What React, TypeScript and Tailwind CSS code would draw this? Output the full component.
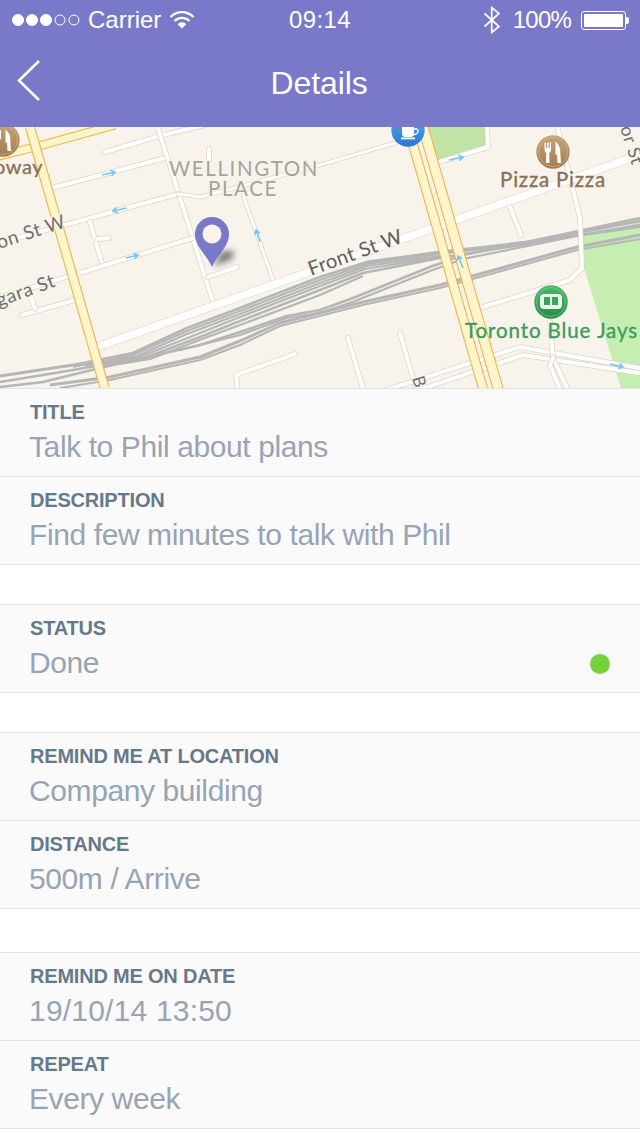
const MAP_FONT = "font-['Lato','Liberation_Sans',sans-serif]";

function Road({ d, w = 4 }: { d: string; w?: number }) {
  return (
    <g fill="none" strokeLinecap="round" strokeLinejoin="round">
      <path d={d} stroke="#dcd5c8" strokeWidth={w + 1.5} />
      <path d={d} stroke="#ffffff" strokeWidth={w} />
    </g>
  );
}

function Highway({ d, w = 9 }: { d: string; w?: number }) {
  return (
    <g fill="none">
      <path d={d} stroke="#f7ae38" strokeWidth={w + 2} />
      <path d={d} stroke="#fdf5cc" strokeWidth={w} />
    </g>
  );
}

function OneWay({ x1, y1, x2, y2 }: { x1: number; y1: number; x2: number; y2: number }) {
  const a = Math.atan2(y2 - y1, x2 - x1);
  const hx = (s: number) => x2 - 5 * Math.cos(a + s);
  const hy = (s: number) => y2 - 5 * Math.sin(a + s);
  return (
    <path
      d={`M${x1} ${y1} L${x2} ${y2} M${hx(0.6)} ${hy(0.6)} L${x2} ${y2} L${hx(-0.6)} ${hy(-0.6)}`}
      fill="none"
      stroke="#72c4fb"
      strokeWidth="1.6"
    />
  );
}

function Cutlery({ cx, cy }: { cx: number; cy: number }) {
  return (
    <g transform={`translate(${cx} ${cy})`}>
      <circle r="16.7" fill="url(#poiBrown)" />
      <circle r="14.5" fill="none" stroke="#d9bd98" strokeWidth="0.8" opacity="0.7" />
      <path
        d="M-8.5 -9.5 L-7.2 -9.5 L-7.2 -4 L-6 -4 L-6 -9.5 L-4.5 -9.5 L-4.5 -4 L-3.3 -4 L-3.3 -9.5 L-2 -9.5 L-2 -3 Q-2 0 -3.8 1 L-3.5 11 L-7 11 L-6.7 1 Q-8.5 0 -8.5 -3 Z"
        fill="#ffffff"
      />
      <path d="M2.5 -10.5 Q8 -6 7.4 2 L8 11 L4.4 11 L4.2 3 L2.5 2.5 Z" fill="#ffffff" />
    </g>
  );
}

function MapView() {
  return (
    <svg viewBox="0 127 640 261" className="block w-full h-[261px]">
      <defs>
        <linearGradient id="poiBrown" x1="0" y1="0" x2="0" y2="1">
          <stop offset="0" stopColor="#c9a47a" />
          <stop offset="1" stopColor="#a27c50" />
        </linearGradient>
        <linearGradient id="poiBlue" x1="0" y1="0" x2="0" y2="1">
          <stop offset="0" stopColor="#58aef5" />
          <stop offset="1" stopColor="#2a78cf" />
        </linearGradient>
        <linearGradient id="poiGreen" x1="0" y1="0" x2="0" y2="1">
          <stop offset="0" stopColor="#4fb768" />
          <stop offset="1" stopColor="#268c44" />
        </linearGradient>
        <filter id="pinBlur" x="-50%" y="-50%" width="200%" height="200%">
          <feGaussianBlur stdDeviation="3" />
        </filter>
      </defs>

      <rect x="0" y="127" width="640" height="261" fill="#f8f4ec" />

      {/* parks */}
      <path d="M427 127 L486 127 L487 147 L436 162 Z" fill="#bfe4a6" />
      <path d="M577 236 L640 222 L640 388 L621 388 L584 268 Z" fill="#c6edb2" />

      {/* rail lines */}
      <g fill="none" stroke="#b6b6b6" strokeWidth="2.2" strokeLinejoin="round">
        <path d="M0 376 L73 365 L133 353 L187 328 L240 308 L320 277 L367 262 L440 252 L477 248 L527 242 L640 218" strokeWidth="2.8" />
        <path d="M640 221 L527 243.5 L477 249.5 L440 254" />
        <path d="M73 367 L133 355 L187 331 L240 311 L320 280 L367 264 L440 254" />
        <path d="M85 366 L137 356 L187 334 L240 314 L320 283 L367 266 L440 256" />
        <path d="M100 364 L142 356 L190 337 L240 317 L320 286 L365 269 L440 257" />
        <path d="M0 382 L73 370 L147 357 L200 337 L240 321 L320 290 L363 273 L440 258 L477 252 L527 244 L640 225" strokeWidth="2.6" />
        <path d="M120 364 L150 359 L205 338 L240 325 L320 295 L363 276" />
        <path d="M0 387 L43 382 L100 368 L200 345 L240 332 L287 316 L320 310 L353 298 L430 267 L463 255 L577 232 L640 221" strokeWidth="2.6" />
        <path d="M180 350 L240 335 L287 318 L320 313 L355 301 L430 271 L463 259 L577 236 L640 227" />
        <path d="M50 385 L110 377 L200 357 L240 341 L280 323 L363 302 L440 285 L577 247 L640 235" strokeWidth="3" />
        <path d="M60 388 L110 380 L200 360 L240 345 L280 326 L363 305 L440 288 L577 250 L640 239" />
      </g>

      {/* small streets */}
      <Road d="M105 152 L163 135 L205 125" />
      <Road d="M52 188 L165 158" />
      <Road d="M157 125 L213 302" />
      <Road d="M-5 244 L178 194" />
      <Road d="M178 194 L201 197 L320 165 L395 143" w={3} />
      <Road d="M243 195 L273 280" w={3} />
      <Road d="M209 149 L209 160" />
      <Road d="M90 222 L102 263" />
      <Road d="M97 239 L109 238" />
      <Road d="M-5 299 L193 238" />
      <Road d="M22 315 L75 300" />
      <Road d="M28 288 L35 309" />
      <Road d="M208 277 L237 267" />
      <Road d="M238 392 L236 375 L295 354" />
      <Road d="M557 125 L580 218 L582 268 L570 280 L480 308" />
      <Road d="M487 125 L488 147 L436 163" />
      <Road d="M508 202 L521 235" />
      <Road d="M348 338 L364 392" />
      <Road d="M400 333 L417 392" />
      <Road d="M380 392 L520 347 L645 369" />
      <Road d="M413 392 L523 355 L645 374" />
      <Road d="M550 322 L553 358 L569 392" />
      <Road d="M553 358 L550 365 L561 392" />

      {/* front st */}
      <path d="M97 347 L645 153" fill="none" stroke="#e3dccd" strokeWidth="9" />
      <path d="M97 347 L645 153" fill="none" stroke="#ffffff" strokeWidth="7.5" />

      {/* highways */}
      <Highway d="M-5 157 L35 147 L115 125" w={7} />
      <Highway d="M30 127 L104.7 388" w={8} />
      <Highway d="M408 127 L484 392" w={8} />
      <Highway d="M423 127 L499 392" w={9} />

      <OneWay x1={102} y1={175} x2={115} y2={172} />
      <OneWay x1={127} y1={208} x2={113} y2={211} />
      <OneWay x1={126} y1={258} x2={138} y2={255} />
      <OneWay x1={260} y1={242} x2={256} y2={230} />
      <OneWay x1={449} y1={160} x2={463} y2={157} />
      <OneWay x1={463} y1={268} x2={458} y2={256} />
      <OneWay x1={610} y1={364} x2={623} y2={367} />

      {/* labels */}
      <g className={MAP_FONT} style={{ paintOrder: "stroke" }} stroke="#f8f4ec" strokeWidth="2.5" strokeLinejoin="round">
        <text x="244" y="176" textAnchor="middle" fontSize="20.5" letterSpacing="1.6" fill="#a5a39e">WELLINGTON</text>
        <text x="243" y="196" textAnchor="middle" fontSize="20.5" letterSpacing="1.6" fill="#a5a39e">PLACE</text>
        <text x="-6" y="174" fontSize="20" letterSpacing="0.6" fill="#8a7254" stroke="#8a7254" strokeWidth="0.35">oway</text>
        <text x="553" y="187" textAnchor="middle" fontSize="20.5" letterSpacing="0.8" fill="#8a7254" stroke="#8a7254" strokeWidth="0.35">Pizza Pizza</text>
        <text x="551.5" y="338" textAnchor="middle" fontSize="20.5" letterSpacing="0.9" fill="#3c9c5a" stroke="#3c9c5a" strokeWidth="0.35">Toronto Blue Jays</text>
        <text transform="translate(311 276) rotate(-20)" fontSize="20" letterSpacing="0.4" fill="#5f5f5f">Front St W</text>
        <text transform="translate(-1 249) rotate(-18)" fontSize="19" letterSpacing="0.6" fill="#6e6e6e">on St W</text>
        <text transform="translate(-1 307) rotate(-20)" fontSize="19" letterSpacing="0.6" fill="#6e6e6e">gara St</text>
        <text transform="translate(620 128) rotate(72)" fontSize="18" letterSpacing="0.6" fill="#6e6e6e">or St</text>
        <text transform="translate(412 378) rotate(73)" fontSize="17" fill="#6e6e6e">B</text>
      </g>

      {/* places */}
      <Cutlery cx={553} cy={152} />
      <Cutlery cx={3} cy={140} />

      <g>
        <circle cx="408" cy="130" r="16.7" fill="url(#poiBlue)" />
        <path d="M402 127 H414 V133 Q414 137 411 137 H405 Q402 137 402 133 Z" fill="#ffffff" />
        <path d="M414 129 H416 Q418 129 418 131 Q418 134 413 135" fill="none" stroke="#ffffff" strokeWidth="1.3" />
        <rect x="401" y="137.5" width="14" height="1.8" fill="#ffffff" />
      </g>

      <g>
        <circle cx="551" cy="302" r="16.7" fill="url(#poiGreen)" />
        <circle cx="551" cy="302" r="14.5" fill="none" stroke="#8fd6a0" strokeWidth="0.8" opacity="0.7" />
        <rect x="540" y="294" width="22" height="15" rx="4" fill="#e9f6ea" />
        <rect x="544" y="297" width="6" height="8" fill="#3aa457" />
        <rect x="552" y="297" width="6" height="8" fill="#3aa457" />
      </g>

      {/* pin */}
      <path d="M213 266 L222 251 L235 251 L231 260 Z" fill="#000000" opacity="0.5" filter="url(#pinBlur)" />
      <path
        d="M212 267 C207 255 195 247 195 234 A17 17 0 0 1 229 234 C229 247 217 255 212 267 Z"
        fill="#7a78c8"
      />
      <circle cx="212" cy="234" r="9.5" fill="#f8f4ec" />
    </svg>
  );
}

function Field({ label, value, dot, wide }: { label: string; value: string; dot?: boolean; wide?: boolean }) {
  return (
    <div className="h-[88px] bg-[#fafafa] border-b border-[#e3e3e3] pl-[30px] pt-[11px]">
      <div className="text-[20px] leading-[24px] font-bold tracking-[-0.2px] text-[#66798b]">{label}</div>
      <div className="mt-[5px] flex items-center justify-between">
        <span className={wide ? "-ml-[1px] text-[30px] leading-[36px] tracking-[0.2px] text-[#98a4b5]" : "-ml-[1px] text-[30px] leading-[36px] tracking-[-0.4px] text-[#98a4b5]"}>{value}</span>
        {dot && <span className="mt-[2px] mr-[30px] w-5 h-5 rounded-full bg-[#74d33c]" />}
      </div>
    </div>
  );
}

export default function App() {
  return (
    <div className="w-[640px] min-h-[1136px] bg-white font-['Liberation_Sans',Arial,sans-serif]">
      <header className="h-[127px] bg-[#7a78c8] text-white">
        <div className="h-10 grid grid-cols-3 items-center text-[24px] leading-none">
          <div className="flex items-center pl-3">
            <svg width="70" height="14" viewBox="0 0 70 14" fill="#ffffff" stroke="#ffffff" className="mr-[6px]">
              <circle cx="6" cy="7" r="5.5" />
              <circle cx="20" cy="7" r="5.5" />
              <circle cx="34" cy="7" r="5.5" />
              <circle cx="48" cy="7" r="5" fill="none" />
              <circle cx="62" cy="7" r="5" fill="none" />
            </svg>
            <span>Carrier</span>
            <svg width="26" height="20" viewBox="0 0 26 20" fill="none" stroke="#ffffff" strokeWidth="2.4" className="ml-2">
              <path d="M1.5 7 A16 16 0 0 1 24.5 7" />
              <path d="M5.5 11 A10.5 10.5 0 0 1 20.5 11" />
              <path d="M13 18.5 L8.6 14.2 A6 6 0 0 1 17.4 14.2 Z" fill="#ffffff" stroke="none" />
            </svg>
          </div>
          <div className="text-center tracking-[0.4px]">09:14</div>
          <div className="flex items-center justify-end pr-[11px]">
            <svg width="18" height="28" viewBox="0 0 18 28" fill="none" stroke="#ffffff" strokeWidth="1.7" className="mr-[12px]">
              <path d="M1.5 7.5 L16 20.5 L8.7 26.5 V1.5 L16 7.5 L1.5 20.5" />
            </svg>
            <span className="tracking-[-0.8px]">100%</span>
            <div className="ml-[10px] flex items-center">
              <div className="w-[45px] h-[19px] rounded-[3px] border border-white p-[2px]">
                <div className="w-full h-full rounded-[1px] bg-white" />
              </div>
              <div className="w-[3px] h-[7px] bg-white rounded-r-[2px]" />
            </div>
          </div>
        </div>
        <div className="h-[87px] relative flex items-center justify-center">
          <svg width="28" height="44" viewBox="0 0 28 44" fill="none" stroke="#ffffff" strokeWidth="2.6" className="absolute left-[15px] top-[19px]">
            <path d="M24 2 L4 21.5 L24 41" />
          </svg>
          <span className="text-[32px] leading-none tracking-[-0.1px] -mt-[1px] -ml-[2px]">Details</span>
        </div>
      </header>

      <div className="border-b border-[#e3e3e3]">
        <MapView />
      </div>

      <Field label="TITLE" value="Talk to Phil about plans" />
      <Field label="DESCRIPTION" value="Find few minutes to talk with Phil" />

      <div className="h-[39px]" />
      <div className="border-t border-[#e3e3e3]">
        <Field label="STATUS" value="Done" dot />
      </div>

      <div className="h-[39px]" />
      <div className="border-t border-[#e3e3e3]">
        <Field label="REMIND ME AT LOCATION" value="Company building" />
        <Field label="DISTANCE" value="500m / Arrive" />
      </div>

      <div className="h-[43px]" />
      <div className="border-t border-[#e3e3e3]">
        <Field label="REMIND ME ON DATE" value="19/10/14 13:50" wide />
        <Field label="REPEAT" value="Every week" />
      </div>
    </div>
  );
}
